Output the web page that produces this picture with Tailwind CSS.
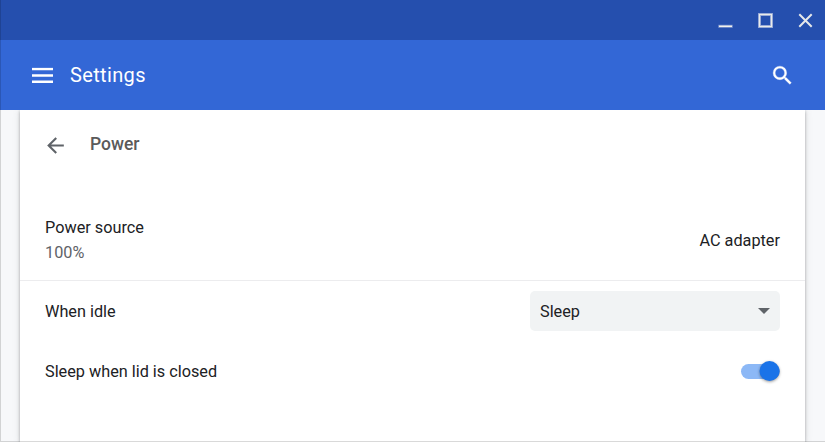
<!DOCTYPE html>
<html lang="en">
<head>
<meta charset="utf-8">
<title>Settings</title>
<script src="https://cdn.jsdelivr.net/npm/@tailwindcss/browser@4"></script>
</head>
<body class="relative flex h-[442px] w-[825px] flex-col overflow-hidden bg-[#f7f8fa] font-['Roboto',sans-serif] text-[16.25px] text-[#202124]">
<div class="flex h-10 shrink-0 items-center justify-end bg-[#254fae]">
  <svg class="h-10 w-[125px]" viewBox="0 0 125 40" fill="none">
    <path d="M18.300 26.300h14.400" stroke="#7f96cf" stroke-width="3"/>
    <path d="M19 26.300h13" stroke="#f1f1ec" stroke-width="1.400"/>
    <rect x="59.500" y="14.500" width="12" height="12" stroke="#8fa3d5" stroke-width="3"/>
    <rect x="59.500" y="14.500" width="12" height="12" stroke="#e9ebe9" stroke-width="1.200"/>
    <path d="M99.300 14.300l12.400 12.400M111.700 14.300L99.300 26.700" stroke="#e6e8ea" stroke-width="2"/>
  </svg>
</div>
<header class="flex h-[70px] shrink-0 items-center bg-[#3367d6] pl-8 pr-[30px] text-white">
  <svg class="h-4 w-[21px] translate-y-[0.5px]" viewBox="0 0 21 16" fill="none" stroke="currentColor" stroke-width="2.4"><path d="M0 1.500h21M0 8h21M0 14.300h21"/></svg>
  <h1 class="ml-[17px] flex-1 text-[20px] tracking-[0.35px]">Settings</h1>
  <svg class="h-[25px] w-[25px]" viewBox="0 0 24 24" fill="currentColor" stroke="currentColor" stroke-width="0.3"><path d="M15.5 14h-.79l-.28-.27A6.471 6.471 0 0 0 16 9.500 6.500 6.500 0 1 0 9.500 16c1.610 0 3.090-.59 4.230-1.570l.27.28v.79l5 4.990L20.490 19l-4.990-5zm-6 0C7.010 14 5 11.990 5 9.500S7.010 5 9.500 5 14 7.010 14 9.500 11.990 14 9.500 14z"/></svg>
</header>
<main class="mx-5 flex-1 bg-white shadow-[0_1px_3px_rgba(60,64,67,0.4),0_1px_8px_rgba(60,64,67,0.12)] [clip-path:inset(0_-12px)]">
  <div class="flex h-[70px] items-center pl-[22.5px]">
    <svg class="h-[25px] w-[25px]" viewBox="0 0 24 24" fill="#5f6368"><path d="M20 11H7.830l5.590-5.590L12 4l-8 8 8 8 1.410-1.410L7.830 13H20v-2z"/></svg>
    <h2 class="ml-[22.5px] pb-[2px] text-[17.5px] font-medium leading-6 text-[#5a5a5a]">Power</h2>
  </div>
  <div class="mt-[20px] flex h-[81px] items-center justify-between border-b border-[#ececee] px-[25px]">
    <div class="leading-[25px]"><div>Power source</div><div class="text-[#5f6368]">100%</div></div>
    <div class="pt-[2px]">AC adapter</div>
  </div>
  <div class="flex h-[60px] items-center justify-between px-[25px]">
    <div class="pt-[2px]">When idle</div>
    <button class="flex h-10 w-[250px] items-center justify-between rounded-[5px] bg-[#f1f3f4] px-[10px]"><span class="pt-[2px]">Sleep</span><svg class="h-[6px] w-3" viewBox="0 0 12 6" fill="#5f6368"><path d="M0 0h12L6 6z"/></svg></button>
  </div>
  <div class="flex h-[60px] items-center justify-between px-[25px]">
    <div class="pt-[2px]">Sleep when lid is closed</div>
    <div class="flex h-[15px] w-[39px] items-center justify-end rounded-full bg-[#8cb8f6]"><div class="h-5 w-5 shrink-0 translate-x-[-0.5px] rounded-full bg-[#1a73e8] shadow-[0_1px_3px_rgba(0,0,0,0.4)]"></div></div>
  </div>
</main>
<div class="pointer-events-none absolute inset-0 border-b border-l border-black/15"></div>
</body>
</html>
